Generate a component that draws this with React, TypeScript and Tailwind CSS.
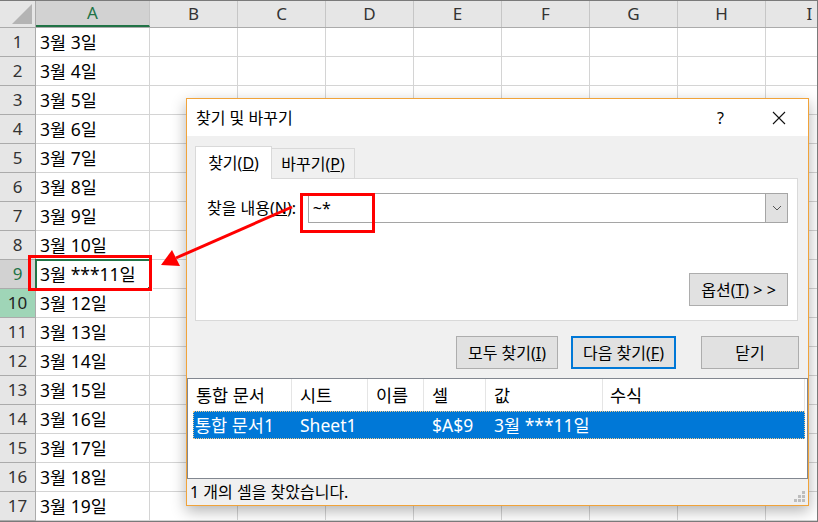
const FONT = "font-['Noto_Sans','Noto_Sans_CJK_KR',sans-serif]";

const cols = ["A", "B", "C", "D", "E", "F", "G", "H", "I"];
const rows = Array.from({ length: 17 }, (_, i) => i + 1);

const cellText = (n: number) => (n === 9 ? "3월 ***11일" : `3월 ${n + 2}일`);

const Sheet = () => {
  return (
    <div className="flex flex-col">
      {/* column headers */}
      <div className="flex h-[27px] border-b border-[#ababab] bg-[#e6e6e6]">
        <div className="w-[36px] shrink-0 border-r border-[#ababab] relative">
          <svg width="36" height="26" className="absolute left-0 top-0">
            <polygon points="12,23 32,23 32,3" fill="#b4b4b4" />
          </svg>
        </div>
        {cols.map((c, i) => (
          <div
            key={c}
            className={
              i === 0
                ? "w-[114px] shrink-0 flex items-center justify-center border-r border-[#c6c6c6] bg-[#d2d2d2] text-[#217346] border-b-2 border-b-[#217346] text-[17px]"
                : "w-[88px] shrink-0 flex items-center justify-center border-r border-[#c6c6c6] text-[#333] text-[17px]"
            }
          >
            {c}
          </div>
        ))}
      </div>
      {rows.map((n) => (
        <div key={n} className="flex h-[29px]">
          <div
            className={
              n === 9
                ? "w-[36px] shrink-0 flex items-center justify-center border-r border-b border-[#ababab] bg-[#d2d2d2] text-[#217346] text-[17px]"
                : n === 10
                  ? "w-[36px] shrink-0 flex items-center justify-center border-r border-b border-[#ababab] bg-[#9fd5b7] text-[#222] text-[17px]"
                  : "w-[36px] shrink-0 flex items-center justify-center border-r border-b border-[#ababab] bg-[#e6e6e6] text-[#333] text-[17px]"
            }
          >
            {n}
          </div>
          <div className="w-[114px] shrink-0 flex items-center pl-[4px] border-r border-b border-[#d4d4d4] text-[17.5px] text-black whitespace-nowrap">
            {cellText(n)}
          </div>
          {cols.slice(1).map((c) => (
            <div key={c} className="w-[88px] shrink-0 border-r border-b border-[#d4d4d4]" />
          ))}
        </div>
      ))}
    </div>
  );
};

const Btn = ({ w, blue, children }: { w: string; blue?: boolean; children: React.ReactNode }) => (
  <div
    className={`${w} h-[33px] flex items-center justify-center bg-[#e1e1e1] text-[16px] text-black ${
      blue ? "border-2 border-[#0078d7]" : "border border-[#adadad]"
    }`}
  >
    {children}
  </div>
);

const Dialog = () => {
  return (
    <div className="absolute left-[186px] top-[97px] w-[623px] h-[408px] border border-[#f0a33a] bg-[#f0f0f0] flex flex-col shadow-[0_5px_14px_rgba(0,0,0,0.3)]">
      {/* title bar */}
      <div className="h-[37px] bg-white flex items-center pl-[9px] pr-[22px] text-[16px] text-black">
        <span>찾기 및 바꾸기</span>
        <span className="ml-auto text-[16px] mr-[1px]">?</span>
        <svg width="14" height="14" className="ml-[47px]">
          <path d="M1 1 L13 13 M13 1 L1 13" stroke="#111" strokeWidth="1.1" />
        </svg>
      </div>

      {/* body */}
      <div className="px-[8px] pt-[10px]">
        <div className="flex items-end">
          <div className="relative z-10 -mb-px w-[77px] h-[33px] bg-white border border-b-0 border-[#d9d9d9] flex items-center justify-center text-[16px]">
            찾기(<u>D</u>)
          </div>
          <div className="w-[83px] h-[30px] border border-l-0 border-b-0 border-[#d9d9d9] flex items-center justify-center text-[16px]">
            바꾸기(<u>P</u>)
          </div>
        </div>
        <div className="w-[603px] h-[143px] bg-white border border-[#d9d9d9] flex flex-col pt-[14px] pl-[11px] pr-[9px] pb-[14px]">
          <div className="flex items-center">
            <div className="w-[101px] text-[16px] whitespace-nowrap">
              찾을 내용(<u>N</u>):
            </div>
            <div className="w-[481px] h-[30px] border border-[#a5a5a5] flex">
              <div className="flex-1 flex items-center pl-[4px] text-[16px]">~*</div>
              <div className="w-[22px] bg-[#e1e1e1] border-l border-[#a5a5a5] flex items-center justify-center">
                <svg width="10" height="6">
                  <path d="M1 1 L5 5 L9 1" stroke="#555" strokeWidth="1" fill="none" />
                </svg>
              </div>
            </div>
          </div>
          <div className="mt-auto flex justify-end">
            <Btn w="w-[99px]">
              <span>
                옵션(<u>T</u>) &gt; &gt;
              </span>
            </Btn>
          </div>
        </div>
        <div className="flex justify-end mt-[15px] pr-[1px]">
          <Btn w="w-[102px]">
            <span>
              모두 찾기(<u>I</u>)
            </span>
          </Btn>
          <div className="w-[13px]" />
          <Btn w="w-[105px]" blue>
            <span>
              다음 찾기(<u>F</u>)
            </span>
          </Btn>
          <div className="w-[25px]" />
          <Btn w="w-[98px]">닫기</Btn>
        </div>
      </div>

      {/* results list */}
      <div className="mt-[9px] h-[101px] bg-white border border-[#828790] text-[17.5px]">
        <div className="flex h-[32px] items-center">
          <div className="w-[104px] pl-[8px] border-r border-[#e5e5e5] h-full flex items-center">통합 문서</div>
          <div className="w-[76px] pl-[8px] border-r border-[#e5e5e5] h-full flex items-center">시트</div>
          <div className="w-[56px] pl-[8px] border-r border-[#e5e5e5] h-full flex items-center">이름</div>
          <div className="w-[62px] pl-[8px] border-r border-[#e5e5e5] h-full flex items-center">셀</div>
          <div className="w-[117px] pl-[8px] border-r border-[#e5e5e5] h-full flex items-center">값</div>
          <div className="w-[202px] pl-[7px] border-r border-[#e5e5e5] h-full flex items-center">수식</div>
        </div>
        <div className="ml-[5px] flex h-[28px] w-[612px] items-center bg-[#0078d7] text-white border border-dotted border-[#f5c987]">
          <div className="w-[98px] pl-[1px] whitespace-nowrap">통합 문서1</div>
          <div className="w-[76px] pl-[8px]">Sheet1</div>
          <div className="w-[56px]" />
          <div className="w-[62px] pl-[8px]">$A$9</div>
          <div className="w-[117px] pl-[8px] whitespace-nowrap">3월 ***11일</div>
        </div>
      </div>

      {/* status bar */}
      <div className="flex-1 flex items-center pl-[3px] text-[16px] relative">
        1 개의 셀을 찾았습니다.
        <svg width="12" height="12" className="absolute right-[2px] bottom-[2px]">
          <rect x="8" y="0" width="3" height="3" fill="#bdbdbd" />
          <rect x="4" y="4" width="3" height="3" fill="#bdbdbd" />
          <rect x="8" y="4" width="3" height="3" fill="#bdbdbd" />
          <rect x="0" y="8" width="3" height="3" fill="#bdbdbd" />
          <rect x="4" y="8" width="3" height="3" fill="#bdbdbd" />
          <rect x="8" y="8" width="3" height="3" fill="#bdbdbd" />
        </svg>
      </div>
    </div>
  );
};

export default function App() {
  return (
    <div className={`relative w-[818px] h-[522px] overflow-hidden bg-white border-t border-r border-b border-[#7a7a7a] ${FONT}`}>
      <Sheet />

      {/* active cell A9 */}
      <div className="absolute left-[35px] top-[258px] w-[116px] h-[31px] border-2 border-[#217346]">
        <div className="absolute -right-[4px] -bottom-[4px] w-[6px] h-[6px] bg-[#217346] border border-white" />
      </div>

      <Dialog />

      {/* red annotations */}
      <div className="absolute left-[28px] top-[254px] w-[124px] h-[36px] border-[3px] border-[#ff0000]" />
      <div className="absolute left-[300px] top-[192px] w-[75px] h-[40px] border-[3px] border-[#ff0000]" />
      <svg width="818" height="522" className="absolute left-0 top-0 pointer-events-none">
        <line x1="292" y1="206" x2="176" y2="257" stroke="#ff0000" strokeWidth="3" />
        <polygon points="161,264 172,249 180,265" fill="#ff0000" />
      </svg>
    </div>
  );
}
